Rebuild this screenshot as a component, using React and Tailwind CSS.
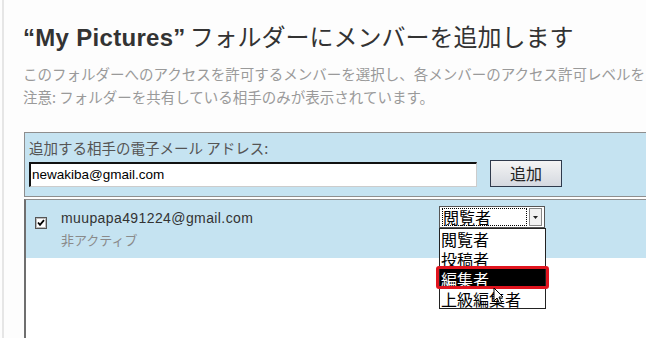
import React from "react";

const jp = { fontFamily: '"Noto Sans CJK JP", "Liberation Sans", sans-serif' };
const latin = { fontFamily: '"Liberation Sans", "Noto Sans CJK JP", sans-serif' };

function CheckBox() {
  return (
    <svg width="12" height="12" viewBox="0 0 12 12" className="shrink-0">
      <rect x="0.5" y="0.5" width="11" height="11" fill="#fff" stroke="#555" />
      <rect x="1.5" y="1.5" width="9" height="9" fill="#fff" stroke="#bbb" />
      <path d="M3 5.5 L5 7.8 L9 3.2" fill="none" stroke="#000" strokeWidth="1.8" />
    </svg>
  );
}

export default function App() {
  return (
    <div className="relative w-[646px] h-[338px] overflow-hidden bg-[#fdfdfd]">
      <div className="ml-[2px] h-full border-l-2 border-[#e6e6e6] pl-[19px] flex flex-col">
        <div className="pt-[21px] text-[24px] leading-[30px] text-[#333] whitespace-nowrap" style={jp}>
          <span className="font-bold tracking-[0.3px]" style={latin}>“My Pictures”</span>
          <span className="ml-[4px]">フォルダーにメンバーを追加します</span>
        </div>
        <div className="mt-[9px] text-[14.5px] leading-[23px] text-[#9a9a9a] whitespace-nowrap" style={jp}>
          <div>このフォルダーへのアクセスを許可するメンバーを選択し、各メンバーのアクセス許可レベルを</div>
          <div>注意: フォルダーを共有している相手のみが表示されています。</div>
        </div>

        <div className="mt-[24px] ml-[1px] w-[640px] border border-[#8e8e8e] bg-[#c5e3f1] pl-[4px] pt-[4px] pb-[9px]">
          <div className="text-[14.5px] leading-[22px] text-[#555]" style={jp}>追加する相手の電子メール アドレス:</div>
          <div className="flex items-center mt-[3px]">
            <div className="w-[448px] h-[25px] bg-white border-t-2 border-l-2 border-[#111] border-r border-b border-r-[#ccc] border-b-[#ccc] flex items-center pl-[1px] text-[13.5px] text-black" style={latin}>
              newakiba@gmail.com
            </div>
            <div className="ml-[13px] -mt-[3px] w-[72px] h-[27px] border border-[#2f3a4c] bg-gradient-to-b from-[#f4f4f4] to-[#d5d9e0] flex items-center justify-center text-[16px] text-[#222]" style={jp}>
              追加
            </div>
          </div>
        </div>

        <div className="mt-[2px] ml-[1px] w-[640px] flex-1 border-t border-l-2 border-[#8e8e8e] border-l-[#6f6f6f] bg-white">
          <div className="h-[58px] bg-[#c5e3f1] flex items-start pl-[9px]">
            <div className="pt-[17px]"><CheckBox /></div>
            <div className="ml-[14px] w-[378px] pt-[8px]">
              <div className="text-[14px] leading-[20px] text-[#333] tracking-[0.4px]" style={latin}>muupapa491224@gmail.com</div>
              <div className="text-[13px] leading-[22px] text-[#8a8a8a] mt-[1px]" style={jp}>非アクティブ</div>
            </div>
            <div className="relative mt-[6px] w-[106px] h-[22px] border border-[#555] bg-white flex items-center">
              <div className="ml-[2px] h-[18px] w-[85px] border border-dotted border-black flex items-center text-[16px] leading-[18px] text-black" style={jp}>閲覧者</div>
              <div className="ml-[2px] w-[13px] h-[18px] border border-[#888] bg-[#f2f2f2] flex items-center justify-center">
                <svg width="5" height="3" viewBox="0 0 5 3"><path d="M0 0 H5 L2.5 3 Z" fill="#222" /></svg>
              </div>
              <div className="absolute left-[-1px] top-[21px] w-[107px] h-[81px] border border-[#222] bg-white text-[16px] leading-[20px]" style={jp}>
                <div className="pl-[1px] h-[20px] text-black">閲覧者</div>
                <div className="pl-[1px] h-[20px] text-black">投稿者</div>
                <div className="pl-[1px] h-[20px] bg-black text-white">編集者</div>
                <div className="pl-[1px] h-[20px] text-black">上級編集者</div>
              </div>
              <div className="absolute left-[-4px] top-[59px] w-[113px] h-[23px] border-[3px] border-[#e0141e] rounded-[3px]" />
              <svg className="absolute left-[53px] top-[80px]" width="12" height="18" viewBox="0 0 12 18">
                <path d="M1 1 L1 14 L4 11 L6.5 16.5 L8.5 15.5 L6 10 L10 10 Z" fill="#fff" stroke="#000" strokeWidth="1" strokeLinejoin="round" />
              </svg>
            </div>
          </div>
        </div>
      </div>
    </div>
  );
}
